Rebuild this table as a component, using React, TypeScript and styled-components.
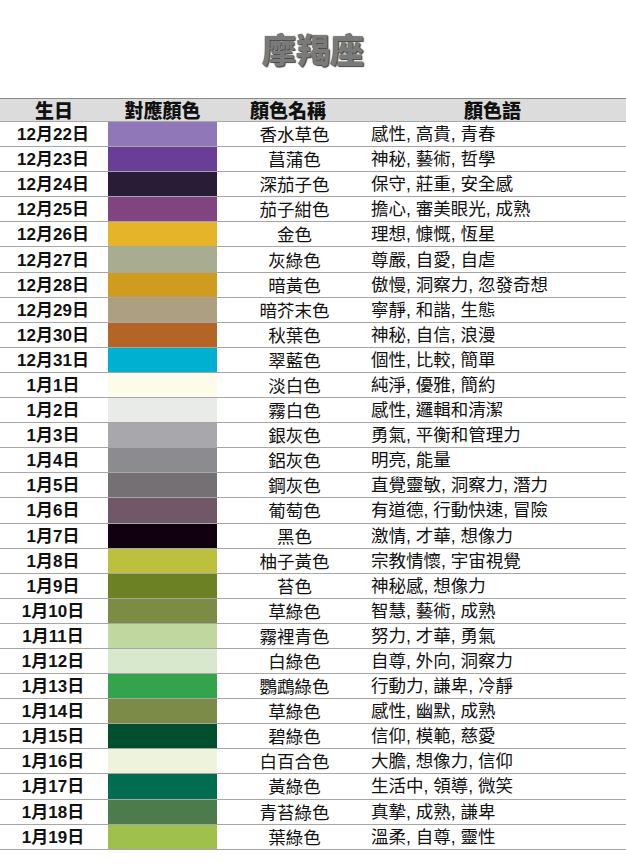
import React from 'react';
import styled, { createGlobalStyle } from 'styled-components';

const GlobalStyle = createGlobalStyle`
  html, body {
    margin: 0;
    padding: 0;
    background: #ffffff;
  }
  body {
    font-family: "Liberation Sans", "Noto Sans CJK TC", sans-serif;
    color: #111;
  }
`;

type Entry = {
  date: string;
  color: string;
  name: string;
  words: string;
};

const entries: Entry[] = [
  { date: '12月22日', color: '#9078b8', name: '香水草色', words: '感性, 高貴, 青春' },
  { date: '12月23日', color: '#6a3e98', name: '菖蒲色', words: '神秘, 藝術, 哲學' },
  { date: '12月24日', color: '#281c36', name: '深茄子色', words: '保守, 莊重, 安全感' },
  { date: '12月25日', color: '#804480', name: '茄子紺色', words: '擔心, 審美眼光, 成熟' },
  { date: '12月26日', color: '#e6b428', name: '金色', words: '理想, 慷慨, 恆星' },
  { date: '12月27日', color: '#a8ac90', name: '灰綠色', words: '尊嚴, 自愛, 自虐' },
  { date: '12月28日', color: '#d09c20', name: '暗黃色', words: '傲慢, 洞察力, 忽發奇想' },
  { date: '12月29日', color: '#aca080', name: '暗芥末色', words: '寧靜, 和諧, 生態' },
  { date: '12月30日', color: '#b46424', name: '秋葉色', words: '神秘, 自信, 浪漫' },
  { date: '12月31日', color: '#00b0d0', name: '翠藍色', words: '個性, 比較, 簡單' },
  { date: '1月1日', color: '#fcfce8', name: '淡白色', words: '純淨, 優雅, 簡約' },
  { date: '1月2日', color: '#e8ebe8', name: '霧白色', words: '感性, 邏輯和清潔' },
  { date: '1月3日', color: '#a8a8ac', name: '銀灰色', words: '勇氣, 平衡和管理力' },
  { date: '1月4日', color: '#8c8c90', name: '鋁灰色', words: '明亮, 能量' },
  { date: '1月5日', color: '#747074', name: '鋼灰色', words: '直覺靈敏, 洞察力, 潛力' },
  { date: '1月6日', color: '#705868', name: '葡萄色', words: '有道德, 行動快速, 冒險' },
  { date: '1月7日', color: '#100010', name: '黑色', words: '激情, 才華, 想像力' },
  { date: '1月8日', color: '#bcc03c', name: '柚子黃色', words: '宗教情懷, 宇宙視覺' },
  { date: '1月9日', color: '#6c8024', name: '苔色', words: '神秘感, 想像力' },
  { date: '1月10日', color: '#7c8c44', name: '草綠色', words: '智慧, 藝術, 成熟' },
  { date: '1月11日', color: '#c0d8a0', name: '霧裡青色', words: '努力, 才華, 勇氣' },
  { date: '1月12日', color: '#d8e8cc', name: '白綠色', words: '自尊, 外向, 洞察力' },
  { date: '1月13日', color: '#34a44c', name: '鸚鵡綠色', words: '行動力, 謙卑, 冷靜' },
  { date: '1月14日', color: '#7c8c48', name: '草綠色', words: '感性, 幽默, 成熟' },
  { date: '1月15日', color: '#005030', name: '碧綠色', words: '信仰, 模範, 慈愛' },
  { date: '1月16日', color: '#eef4dc', name: '白百合色', words: '大膽, 想像力, 信仰' },
  { date: '1月17日', color: '#006c50', name: '黃綠色', words: '生活中, 領導, 微笑' },
  { date: '1月18日', color: '#4c7c4c', name: '青苔綠色', words: '真摯, 成熟, 謙卑' },
  { date: '1月19日', color: '#a0c04c', name: '葉綠色', words: '溫柔, 自尊, 靈性' },
];

const Page = styled.div`
  width: 626px;
  min-height: 868px;
  display: flex;
  flex-direction: column;
`;

const TitleBar = styled.div`
  height: 98px;
  display: flex;
  align-items: flex-start;
  justify-content: center;
  padding-top: 27px;
  box-sizing: border-box;
`;

const Title = styled.h1`
  margin: 0;
  font-family: "Noto Sans CJK TC", sans-serif;
  font-weight: 900;
  font-size: 34px;
  line-height: 44px;
  color: #7a7a7a;
  text-shadow: 0 0 1px #333, 1px 1px 1px #444;
`;

const Table = styled.div`
  display: flex;
  flex-direction: column;
`;

const HeaderRow = styled.div`
  display: grid;
  grid-template-columns: 108px 109px 142px 1fr;
  height: 24px;
  align-items: center;
  background: #dcdcdc;
  border-top: 1px solid #8a8a8a;
  border-bottom: 1px solid #a8a8a8;
  box-sizing: border-box;
`;

const HeaderCell = styled.div`
  text-align: center;
  font-family: "Noto Sans CJK TC", sans-serif;
  font-weight: 900;
  font-size: 19px;
  line-height: 22px;
  color: #111;
`;

const Row = styled.div`
  display: grid;
  grid-template-columns: 108px 109px 155px 1fr;
  height: 25.1px;
  align-items: center;
  border-bottom: 1px solid #a6a6a6;
  box-sizing: border-box;
`;

const DateCell = styled.div`
  text-align: center;
  font-weight: 700;
  font-size: 17px;
  line-height: 20px;
  padding: 2px 2px 0 0;
`;

const Swatch = styled.div<{ $color: string }>`
  align-self: stretch;
  background: ${({ $color }) => $color};
`;

const NameCell = styled.div`
  text-align: center;
  font-family: "Noto Sans CJK TC", sans-serif;
  font-size: 17.5px;
  line-height: 20px;
`;

const WordsCell = styled.div`
  font-size: 17.5px;
  line-height: 20px;
  white-space: nowrap;
  margin-left: -1px;
`;

export default function App() {
  return (
    <Page>
      <GlobalStyle />
      <TitleBar>
        <Title>摩羯座</Title>
      </TitleBar>
      <Table>
        <HeaderRow>
          <HeaderCell>生日</HeaderCell>
          <HeaderCell>對應顏色</HeaderCell>
          <HeaderCell>顏色名稱</HeaderCell>
          <HeaderCell>顏色語</HeaderCell>
        </HeaderRow>
        {entries.map((e) => (
          <Row key={e.date}>
            <DateCell>{e.date}</DateCell>
            <Swatch $color={e.color} />
            <NameCell>{e.name}</NameCell>
            <WordsCell>{e.words}</WordsCell>
          </Row>
        ))}
      </Table>
    </Page>
  );
}
